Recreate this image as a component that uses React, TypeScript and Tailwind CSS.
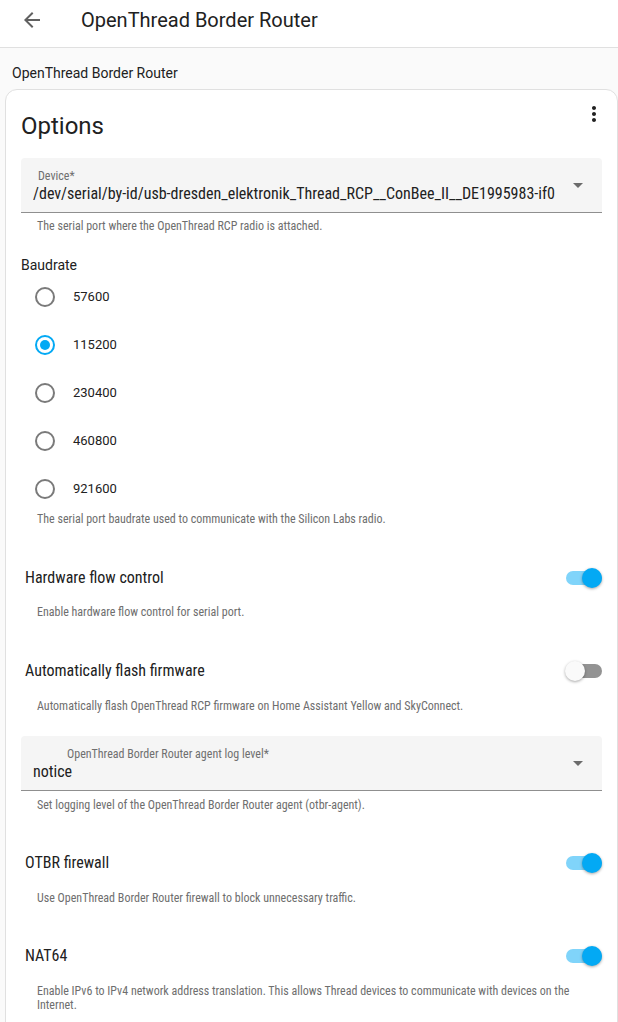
import React from "react";

const ArrowBack = () => (
  <svg width="24" height="24" viewBox="0 0 24 24" fill="#616161">
    <path d="M20 11H7.83l5.59-5.59L12 4l-8 8 8 8 1.41-1.41L7.83 13H20v-2z" />
  </svg>
);

const MoreVert = () => (
  <svg width="24" height="24" viewBox="0 0 24 24" fill="#212121">
    <path d="M12 8c1.1 0 2-.9 2-2s-.9-2-2-2-2 .9-2 2 .9 2 2 2zm0 2c-1.1 0-2 .9-2 2s.9 2 2 2 2-.9 2-2-.9-2-2-2zm0 6c-1.1 0-2 .9-2 2s.9 2 2 2 2-.9 2-2-.9-2-2-2z" />
  </svg>
);

const DropArrow = () => (
  <svg width="24" height="24" viewBox="0 0 24 24" fill="#6b6b6b" className="shrink-0">
    <path d="M7 10l5 5 5-5z" />
  </svg>
);

function SelectField({ label, value, labelPad }: { label: string; value: string; labelPad: string }) {
  return (
    <div className="h-[55px] bg-[#f5f5f5] rounded-t-[4px] border-b border-[#8f8f8f] flex items-center pl-3 pr-3">
      <div className="flex-1 min-w-0 overflow-hidden self-stretch pt-3">
        <div className={`text-[12px] leading-[12px] text-[#6f6f6f] font-stretch-semi-condensed ${labelPad}`}>{label}</div>
        <div className="mt-[3px] text-[16px] leading-[18px] text-[#212121] whitespace-nowrap overflow-hidden font-stretch-semi-condensed">
          {value}
        </div>
      </div>
      <div className="ml-[11px]">
        <DropArrow />
      </div>
    </div>
  );
}

function Helper({ children, className = "" }: { children: React.ReactNode; className?: string }) {
  return (
    <div className={`pl-4 pr-4 text-[12px] leading-[14px] text-[#6e6e6e] font-stretch-semi-condensed ${className}`}>
      {children}
    </div>
  );
}

function Radio({ label, checked }: { label: string; checked?: boolean }) {
  return (
    <div className="h-12 flex items-center pl-[14px]">
      <div
        className={`w-5 h-5 rounded-full border-2 flex items-center justify-center ${
          checked ? "border-[#03a9f4]" : "border-[#7a7a7a]"
        }`}
      >
        {checked && <div className="w-[10px] h-[10px] rounded-full bg-[#03a9f4]" />}
      </div>
      <span className="ml-[18px] text-[13px] text-[#212121]">{label}</span>
    </div>
  );
}

function Toggle({ on }: { on?: boolean }) {
  return (
    <div className="relative w-[37px] h-5 flex items-center">
      <div className={`w-[36px] h-[14px] rounded-full ml-px ${on ? "bg-[#80d4fa]" : "bg-[#939393]"}`} />
      <div
        className={`absolute top-0 w-5 h-5 rounded-full shadow-[0_1px_3px_rgba(0,0,0,0.35)] ${
          on ? "right-0 bg-[#03a9f4]" : "left-0 bg-[#fafafa]"
        }`}
      />
    </div>
  );
}

function SwitchRow({ label, on, className = "" }: { label: string; on?: boolean; className?: string }) {
  return (
    <div className={`h-6 flex items-center justify-between pl-1 ${className}`}>
      <span className="text-[16px] text-[#212121] font-stretch-semi-condensed">{label}</span>
      <Toggle on={on} />
    </div>
  );
}

export default function App() {
  return (
    <div className="min-h-screen bg-[#fafafa] font-['Roboto',sans-serif] text-[#212121]">
      <header className="h-12 bg-white border-b border-[#e0e0e0] pb-[7px] flex items-center">
        <button className="ml-2 w-12 h-10 flex items-center justify-center">
          <ArrowBack />
        </button>
        <h1 className="ml-[25px] text-[20px] leading-6 text-[#212121]">OpenThread Border Router</h1>
      </header>

      <div className="px-3 pt-[15px] pb-[6px] text-[14px] leading-5 text-[#212121]">OpenThread Border Router</div>

      <div className="ml-[5px] bg-white border border-[#e0e0e0] rounded-[12px] pl-[15px] pr-[15px] pt-[12px] pb-6">
        <div className="flex items-start justify-between">
          <h2 className="mt-2 text-[24px] leading-8 text-[#212121]">Options</h2>
          <div className="-mr-1">
            <MoreVert />
          </div>
        </div>

        <div className="mt-4">
          <SelectField
            label="Device*"
            value="/dev/serial/by-id/usb-dresden_elektronik_Thread_RCP__ConBee_II__DE1995983-if00"
            labelPad="pl-[5px]"
          />
        </div>
        <Helper className="mt-[6px]">The serial port where the OpenThread RCP radio is attached.</Helper>

        <div className="mt-6 text-[14px] leading-4 text-[#212121]">Baudrate</div>
        <div>
          <Radio label="57600" />
          <Radio label="115200" checked />
          <Radio label="230400" />
          <Radio label="460800" />
          <Radio label="921600" />
        </div>
        <Helper className="-mt-px">The serial port baudrate used to communicate with the Silicon Labs radio.</Helper>

        <SwitchRow label="Hardware flow control" on className="mt-10" />
        <Helper className="mt-[15px]">Enable hardware flow control for serial port.</Helper>

        <SwitchRow label="Automatically flash firmware" className="mt-10" />
        <Helper className="mt-4">
          Automatically flash OpenThread RCP firmware on Home Assistant Yellow and SkyConnect.
        </Helper>

        <div className="mt-[23px]">
          <SelectField label="OpenThread Border Router agent log level*" value="notice" labelPad="pl-[34px]" />
        </div>
        <Helper className="mt-[7px]">Set logging level of the OpenThread Border Router agent (otbr-agent).</Helper>

        <SwitchRow label="OTBR firewall" on className="mt-[39px]" />
        <Helper className="mt-4">Use OpenThread Border Router firewall to block unnecessary traffic.</Helper>

        <SwitchRow label="NAT64" on className="mt-[39px]" />
        <Helper className="mt-4 leading-[13px]">
          Enable IPv6 to IPv4 network address translation. This allows Thread devices to communicate with devices on
          the Internet.
        </Helper>
      </div>
    </div>
  );
}
